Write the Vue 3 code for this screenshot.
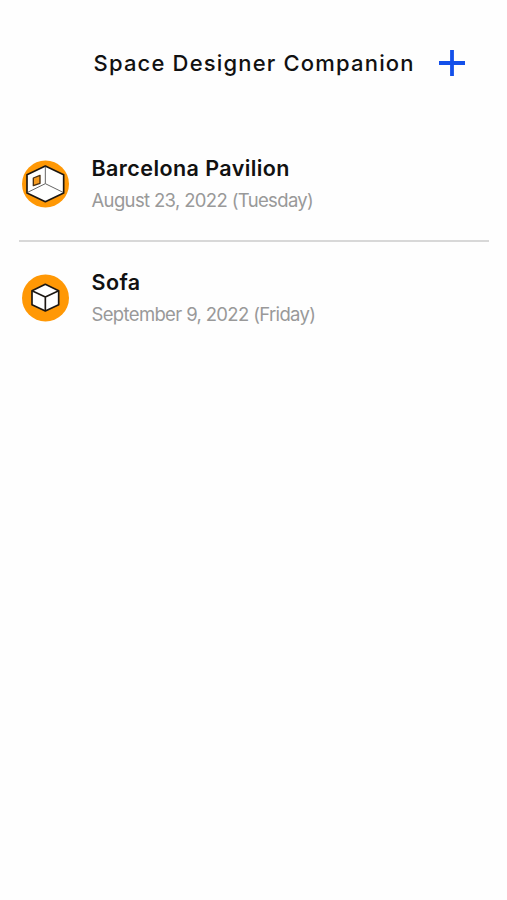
<script setup>
const projects = [
  { name: 'Barcelona Pavilion', date: 'August 23, 2022 (Tuesday)', kind: 'room' },
  { name: 'Sofa', date: 'September 9, 2022 (Friday)', kind: 'object' },
]
</script>

<template>
  <main class="screen">
    <header class="header">
      <h1 class="title">Space Designer Companion</h1>
      <button class="add" aria-label="Add project">
        <svg width="28" height="28" viewBox="0 0 28 28">
          <path d="M14 1v26M1 14h26" fill="none" stroke="#1350ea" stroke-width="3.8" />
        </svg>
      </button>
    </header>
    <ul class="list">
      <li v-for="p in projects" :key="p.name" class="item">
        <svg class="icon" viewBox="0 0 144 144">
          <circle cx="70.5" cy="72" r="70.5" fill="#ff9805" />
          <g v-if="p.kind === 'room'" stroke-linejoin="round">
            <path d="M70 18L125 44V99L70 125L15 99V44Z" fill="#fff" stroke="#1c1712" stroke-width="5" />
            <path d="M70 20V71M70 71L17 97M70 71L123 97" fill="none" stroke="#666" stroke-width="3" />
            <path d="M34 54L54 46V70L34 77Z" fill="#f49a20" stroke="#4a3011" stroke-width="4" />
          </g>
          <g v-else stroke-linejoin="round" stroke="#1c1712" stroke-width="5">
            <path d="M70 31L110 50V92L70 111L30 92V50Z" fill="#fff" />
            <path d="M30 50L70 69L110 50M70 69V111" fill="none" />
          </g>
        </svg>
        <div class="text">
          <h2 class="name">{{ p.name }}</h2>
          <p class="date">{{ p.date }}</p>
        </div>
      </li>
    </ul>
  </main>
</template>

<style>
body {
  margin: 0;
  background: #fefefe;
}
</style>

<style scoped>
.screen {
  box-sizing: border-box;
  min-height: 900px;
  padding-top: 43px;
  font-family: Inter, "Liberation Sans", sans-serif;
  background: #fefefe;
}
.header {
  display: flex;
  align-items: center;
  height: 40px;
  padding-left: 93.5px;
}
.title {
  width: 344px;
  margin: 0;
  font-size: 22px;
  line-height: 40px;
  font-weight: 500;
  letter-spacing: 1.18px;
  color: #111;
  white-space: nowrap;
}
.add {
  display: block;
  width: 28px;
  height: 28px;
  padding: 0;
  border: 0;
  background: none;
}
.add svg {
  display: block;
}
.list {
  margin: 44px 18px 0 19px;
  padding: 0;
  list-style: none;
}
.item {
  display: flex;
  align-items: center;
  gap: 21.5px;
  box-sizing: border-box;
  height: 114px;
  padding-left: 3px;
}
.item + .item {
  height: 114px;
  border-top: 2px solid #d8d8d8;
  margin-top: -1px;
}
.icon {
  display: block;
  flex: none;
  width: 48px;
  height: 48px;
}
.name {
  margin: 0;
  font-size: 21.5px;
  line-height: 30px;
  font-weight: 600;
  letter-spacing: 0.42px;
  color: #111;
}
.date {
  margin: 2px 0 0;
  font-size: 18.5px;
  line-height: 30px;
  letter-spacing: -0.65px;
  color: #999;
}
</style>
